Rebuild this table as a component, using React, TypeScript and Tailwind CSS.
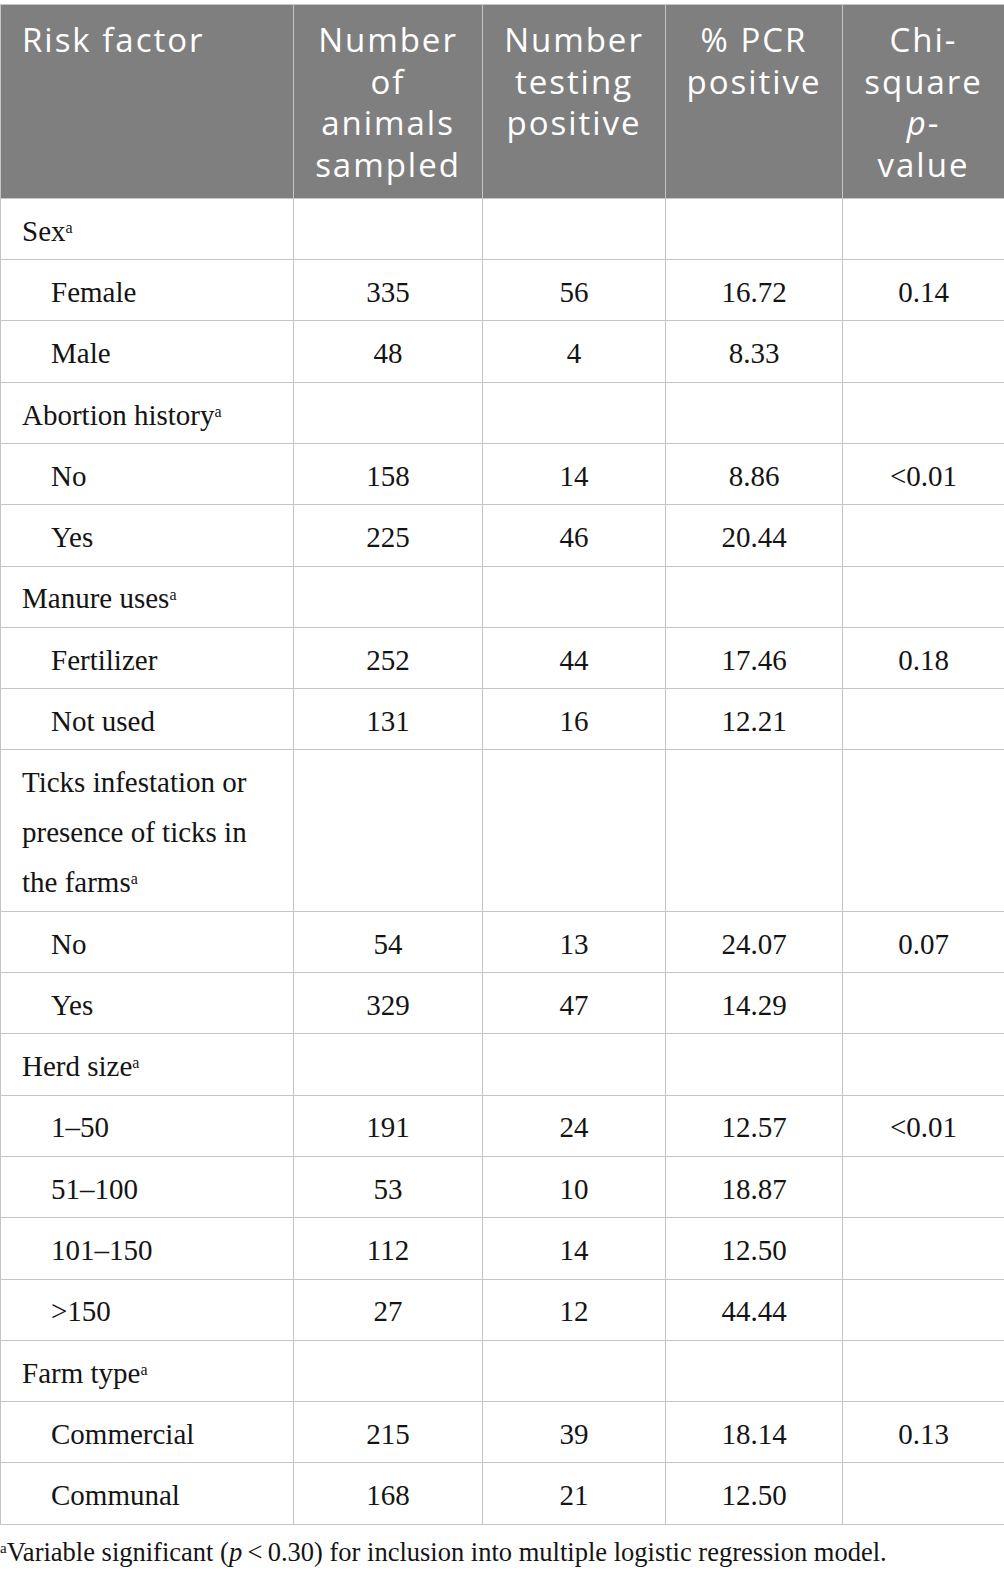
type Row =
  | { kind: "cat"; label: string[] }
  | { kind: "item"; label: string; n: string; pos: string; pct: string; p?: string };

const ROWS: Row[] = [
  { kind: "cat", label: ["Sex"] },
  { kind: "item", label: "Female", n: "335", pos: "56", pct: "16.72", p: "0.14" },
  { kind: "item", label: "Male", n: "48", pos: "4", pct: "8.33" },
  { kind: "cat", label: ["Abortion history"] },
  { kind: "item", label: "No", n: "158", pos: "14", pct: "8.86", p: "<0.01" },
  { kind: "item", label: "Yes", n: "225", pos: "46", pct: "20.44" },
  { kind: "cat", label: ["Manure uses"] },
  { kind: "item", label: "Fertilizer", n: "252", pos: "44", pct: "17.46", p: "0.18" },
  { kind: "item", label: "Not used", n: "131", pos: "16", pct: "12.21" },
  { kind: "cat", label: ["Ticks infestation or", "presence of ticks in", "the farms"] },
  { kind: "item", label: "No", n: "54", pos: "13", pct: "24.07", p: "0.07" },
  { kind: "item", label: "Yes", n: "329", pos: "47", pct: "14.29" },
  { kind: "cat", label: ["Herd size"] },
  { kind: "item", label: "1–50", n: "191", pos: "24", pct: "12.57", p: "<0.01" },
  { kind: "item", label: "51–100", n: "53", pos: "10", pct: "18.87" },
  { kind: "item", label: "101–150", n: "112", pos: "14", pct: "12.50" },
  { kind: "item", label: ">150", n: "27", pos: "12", pct: "44.44" },
  { kind: "cat", label: ["Farm type"] },
  { kind: "item", label: "Commercial", n: "215", pos: "39", pct: "18.14", p: "0.13" },
  { kind: "item", label: "Communal", n: "168", pos: "21", pct: "12.50" },
];

// body cells: one 50px line, text sits a little low in the row
const td = "border border-[#c4c4c4] pt-[6.8px] pb-[3.5px] align-top";
const num = td + " text-center";
const th = "border border-[#c4c4c4] pt-[14px] pb-[12px] align-top font-normal";

function Sup() {
  return <sup className="text-[16px]">a</sup>;
}

export default function App() {
  return (
    <div className="w-[1004px] bg-white pt-[4px] font-['Liberation_Serif',serif] text-[29px] leading-[50px] text-[#141414]">
      <table className="w-[1004px] table-fixed border-collapse">
        <colgroup>
          <col className="w-[293px]" />
          <col className="w-[189px]" />
          <col className="w-[183px]" />
          <col className="w-[177px]" />
          <col className="w-[162px]" />
        </colgroup>
        <thead>
          <tr className="bg-[#7f7f7f] font-['Open_Sans',sans-serif] text-[33px] leading-[41.7px] tracking-[0.06em] text-white">
            <th className={th + " pl-[21px] text-left"}>Risk factor</th>
            <th className={th + " text-center"}>
              Number
              <br />
              of
              <br />
              animals
              <br />
              sampled
            </th>
            <th className={th + " text-center"}>
              Number
              <br />
              testing
              <br />
              positive
            </th>
            <th className={th + " text-center"}>
              % PCR
              <br />
              positive
            </th>
            <th className={th + " text-center"}>
              Chi-
              <br />
              square
              <br />
              <i>p</i>-
              <br />
              value
            </th>
          </tr>
        </thead>
        <tbody>
          {ROWS.map((r, i) =>
            r.kind === "cat" ? (
              <tr key={i}>
                <td className={td + " pl-[21px]"}>
                  {r.label.map((l, j) => (
                    <span key={j}>
                      {l}
                      {j === r.label.length - 1 ? <Sup /> : <br />}
                    </span>
                  ))}
                </td>
                <td className={td}></td>
                <td className={td}></td>
                <td className={td}></td>
                <td className={td}></td>
              </tr>
            ) : (
              <tr key={i}>
                <td className={td + " pl-[50px]"}>{r.label}</td>
                <td className={num}>{r.n}</td>
                <td className={num}>{r.pos}</td>
                <td className={num}>{r.pct}</td>
                <td className={num}>{r.p ?? ""}</td>
              </tr>
            ),
          )}
        </tbody>
      </table>
      <p className="mt-[12px] text-[26.5px] leading-[30px]">
        <sup className="text-[15px]">a</sup>Variable significant (<i>p</i>
        {"\u2009<\u2009"}0.30) for inclusion into multiple logistic regression model.
      </p>
    </div>
  );
}
